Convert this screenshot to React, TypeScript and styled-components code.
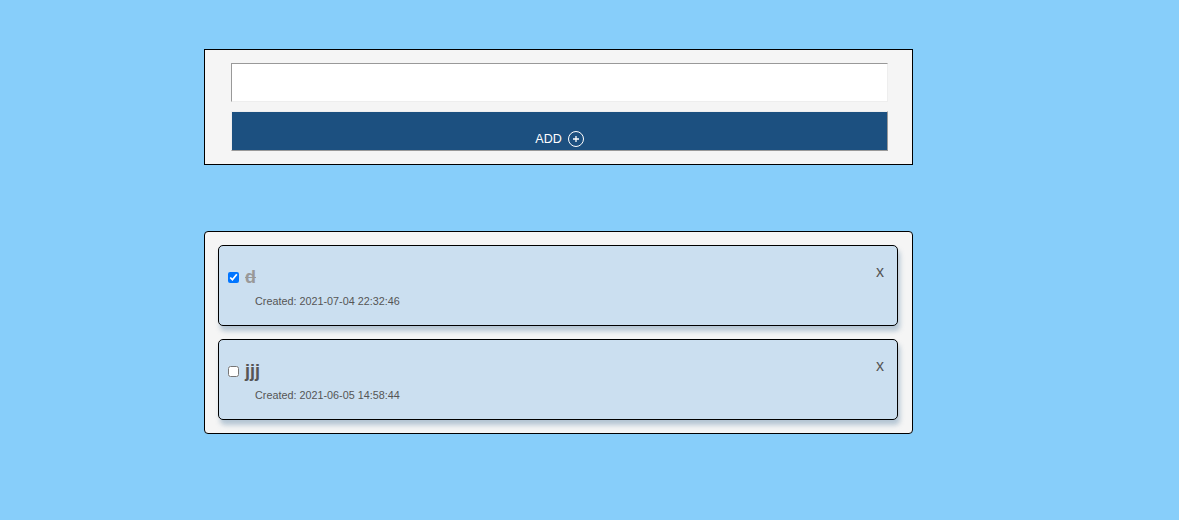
import React, { useState } from 'react';
import styled, { createGlobalStyle } from 'styled-components';

const GlobalStyle = createGlobalStyle`
  html, body {
    margin: 0;
    padding: 0;
    background: #87cefa;
    font-family: "Liberation Sans", Arial, sans-serif;
  }
`;

const Page = styled.div`
  width: 709px;
  margin-left: 204px;
  padding-top: 49px;
  height: 471px;
  box-sizing: content-box;
`;

const Form = styled.form`
  box-sizing: border-box;
  width: 709px;
  height: 116px;
  padding: 13px 24px 0 26px;
  background: #f5f5f5;
  border: 1px solid #000;
  display: flex;
  flex-direction: column;
  gap: 9px;
`;

const TextInput = styled.input`
  box-sizing: border-box;
  display: block;
  width: 100%;
  height: 39px;
  padding: 0 4px;
  background: #fff;
  border-width: 1px;
  border-style: solid;
  border-color: #999 #eee #eee #999;
  outline: none;
`;

const AddButton = styled.button`
  box-sizing: border-box;
  display: flex;
  align-items: flex-end;
  justify-content: center;
  gap: 6px;
  width: 100%;
  height: 40px;
  padding: 0 0 3px;
  background: #1c5080;
  color: #fff;
  font-family: inherit;
  font-size: 12.5px;
  line-height: 16px;
  border-width: 1px;
  border-style: solid;
  border-color: #eee #999 #999 #eee;
`;

const List = styled.div`
  box-sizing: border-box;
  width: 709px;
  height: 203px;
  margin-top: 66px;
  padding: 13px 14px 0 13px;
  background: #f5f5f5;
  border: 1px solid #000;
  border-radius: 4px;
  display: flex;
  flex-direction: column;
  gap: 13px;
`;

const Item = styled.div`
  box-sizing: border-box;
  height: 81px;
  padding: 14px 0 0 5px;
  background: #cbdff0;
  border: 1px solid #000;
  border-radius: 5px;
  box-shadow: 2px 5px 5px rgba(60, 110, 150, 0.35);
  position: relative;
`;

const TitleRow = styled.label`
  display: flex;
  align-items: center;
  height: 34px;
`;

const Check = styled.input`
  width: 11px;
  height: 11px;
  margin: 3px 3px 3px 4px;
`;

const Title = styled.span<{ $done: boolean }>`
  margin-left: 3px;
  font-size: 18px;
  font-weight: bold;
  color: ${(p) => (p.$done ? '#999' : '#555')};
  text-decoration: ${(p) => (p.$done ? 'line-through' : 'none')};
`;

const Created = styled.div`
  margin: 1px 0 0 31px;
  font-size: 10.8px;
  line-height: 12px;
  color: #555;
`;

const Remove = styled.span`
  position: absolute;
  top: 18px;
  right: 13px;
  font-size: 16px;
  line-height: 16px;
  color: #555;
`;

const PlusCircle = () => (
  <svg width="16" height="16" viewBox="0 0 16 16" fill="none" stroke="#fff">
    <circle cx="8" cy="8" r="7.5" />
    <path d="M5 8h6M8 5v6" strokeWidth="1.3" />
  </svg>
);

const initialTodos = [
  { id: 1, title: 'd', created: '2021-07-04 22:32:46', done: true },
  { id: 2, title: 'jjj', created: '2021-06-05 14:58:44', done: false },
];

export default function App() {
  const [todos, setTodos] = useState(initialTodos);
  const toggle = (id: number) =>
    setTodos(todos.map((t) => (t.id === id ? { ...t, done: !t.done } : t)));

  return (
    <Page>
      <GlobalStyle />
      <Form onSubmit={(e) => e.preventDefault()}>
        <TextInput type="text" />
        <AddButton type="submit">
          ADD <PlusCircle />
        </AddButton>
      </Form>
      <List>
        {todos.map((t) => (
          <Item key={t.id}>
            <TitleRow>
              <Check type="checkbox" checked={t.done} onChange={() => toggle(t.id)} />
              <Title $done={t.done}>{t.title}</Title>
            </TitleRow>
            <Created>Created: {t.created}</Created>
            <Remove>x</Remove>
          </Item>
        ))}
      </List>
    </Page>
  );
}
